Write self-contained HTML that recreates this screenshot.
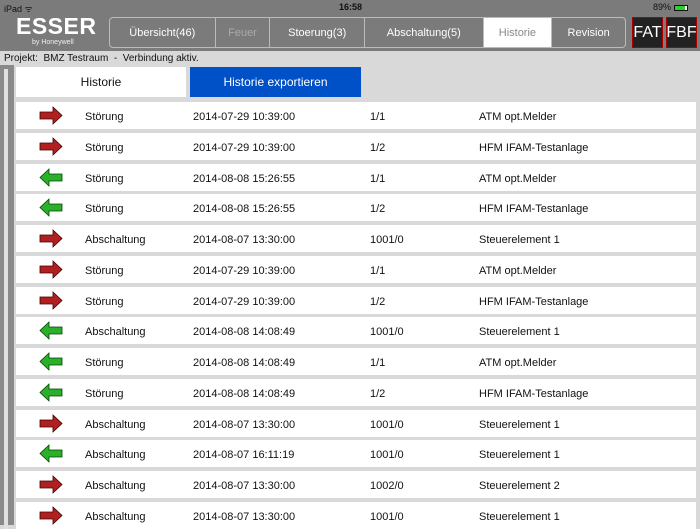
<!DOCTYPE html>
<html><head><style>
*{margin:0;padding:0;box-sizing:border-box}
body{width:700px;height:525px;overflow:hidden;background:#d9d9d9;font-family:"Liberation Sans",sans-serif;position:relative}
.hdr{position:absolute;left:0;top:0;width:700px;height:51px;background:#7b7b7b}
.sb{position:absolute;top:2px;font-size:9px;color:#111}
.logo{position:absolute;left:16px;top:13px;color:#fff;font-weight:bold;font-size:23px;letter-spacing:0.5px}
.by{position:absolute;left:32px;top:39px;color:#eee;font-size:7px}
.tabs{position:absolute;left:109px;top:17px;width:517px;height:31px;border:1px solid #bbb;border-radius:4px;overflow:hidden;display:flex}
.tabs div{height:100%;display:flex;align-items:center;justify-content:center;color:#fff;font-size:11px;border-right:1px solid #bbb}
.fb{position:absolute;top:17px;width:31px;height:31px;background:#222;border:1px solid #a00;color:#fff;font-size:16px;display:flex;align-items:center;justify-content:center}
.proj{position:absolute;left:4px;top:53px;font-size:10px;color:#111}
.strip{position:absolute;left:0;top:65px;width:14px;height:460px;background:#8a8a8a}
.strip i{position:absolute;left:4px;top:4px;width:4px;height:460px;background:#e0e0e0}
.btn{position:absolute;top:67px;height:30px;display:flex;align-items:center;justify-content:center;font-size:12px}
.row{position:absolute;left:16px;width:680px;height:27px;background:#fff;font-size:11px;color:#111}
.row span{position:absolute;top:9px}
.row svg{position:absolute;left:23px;top:4px}
</style></head><body>
<div class="hdr"></div>
<div class="sb" style="left:4px">iPad ᯤ</div>
<div class="sb" style="left:339px;font-weight:bold">16:58</div>
<div class="sb" style="left:653px">89% <span style="display:inline-block;width:14px;height:6px;border:1px solid #111;vertical-align:middle;background:linear-gradient(90deg,#3c3 85%,#fff 85%)"></span></div>
<div class="logo">ESSER</div>
<div class="by">by Honeywell</div>
<div class="tabs">
<div style="width:106px">Übersicht(46)</div>
<div style="width:55px;color:#aaa">Feuer</div>
<div style="width:95px">Stoerung(3)</div>
<div style="width:119px">Abschaltung(5)</div>
<div style="width:69px;background:#fff;color:#888">Historie</div>
<div style="width:73px;border:none">Revision</div>
</div>
<div class="fb" style="left:632px">FAT</div>
<div class="fb" style="left:666px">FBF</div>
<div class="proj">Projekt:&nbsp; BMZ Testraum&nbsp; -&nbsp; Verbindung aktiv.</div>
<div class="strip"><i></i></div>
<div class="btn" style="left:16px;width:170px;background:#fff;color:#111">Historie</div>
<div class="btn" style="left:190px;width:171px;background:#0050c8;color:#fff">Historie exportieren</div>
<div id="rows"></div>
<script>
var d=[["r","Störung","2014-07-29 10:39:00","1/1","ATM opt.Melder"],["r","Störung","2014-07-29 10:39:00","1/2","HFM IFAM-Testanlage"],["g","Störung","2014-08-08 15:26:55","1/1","ATM opt.Melder"],["g","Störung","2014-08-08 15:26:55","1/2","HFM IFAM-Testanlage"],["r","Abschaltung","2014-08-07 13:30:00","1001/0","Steuerelement 1"],["r","Störung","2014-07-29 10:39:00","1/1","ATM opt.Melder"],["r","Störung","2014-07-29 10:39:00","1/2","HFM IFAM-Testanlage"],["g","Abschaltung","2014-08-08 14:08:49","1001/0","Steuerelement 1"],["g","Störung","2014-08-08 14:08:49","1/1","ATM opt.Melder"],["g","Störung","2014-08-08 14:08:49","1/2","HFM IFAM-Testanlage"],["r","Abschaltung","2014-08-07 13:30:00","1001/0","Steuerelement 1"],["g","Abschaltung","2014-08-07 16:11:19","1001/0","Steuerelement 1"],["r","Abschaltung","2014-08-07 13:30:00","1002/0","Steuerelement 2"],["r","Abschaltung","2014-08-07 13:30:00","1001/0","Steuerelement 1"]];
var h="";
d.forEach(function(r,i){var y=102+Math.round(i*30.75);
var p=r[0]=="r"?'<polygon points="1,6 14,6 14,1 23,9.5 14,18 14,13 1,13" fill="#b02020" stroke="#400" stroke-width="0.8"/>':'<polygon points="23,6 10,6 10,1 1,9.5 10,18 10,13 23,13" fill="#2cb02c" stroke="#040" stroke-width="0.8"/>';
h+='<div class="row" style="top:'+y+'px"><svg width="25" height="20">'+p+'</svg><span style="left:69px">'+r[1]+'</span><span style="left:177px">'+r[2]+'</span><span style="left:354px">'+r[3]+'</span><span style="left:463px">'+r[4]+'</span></div>';});
document.getElementById("rows").innerHTML=h;
</script>
</body></html>
